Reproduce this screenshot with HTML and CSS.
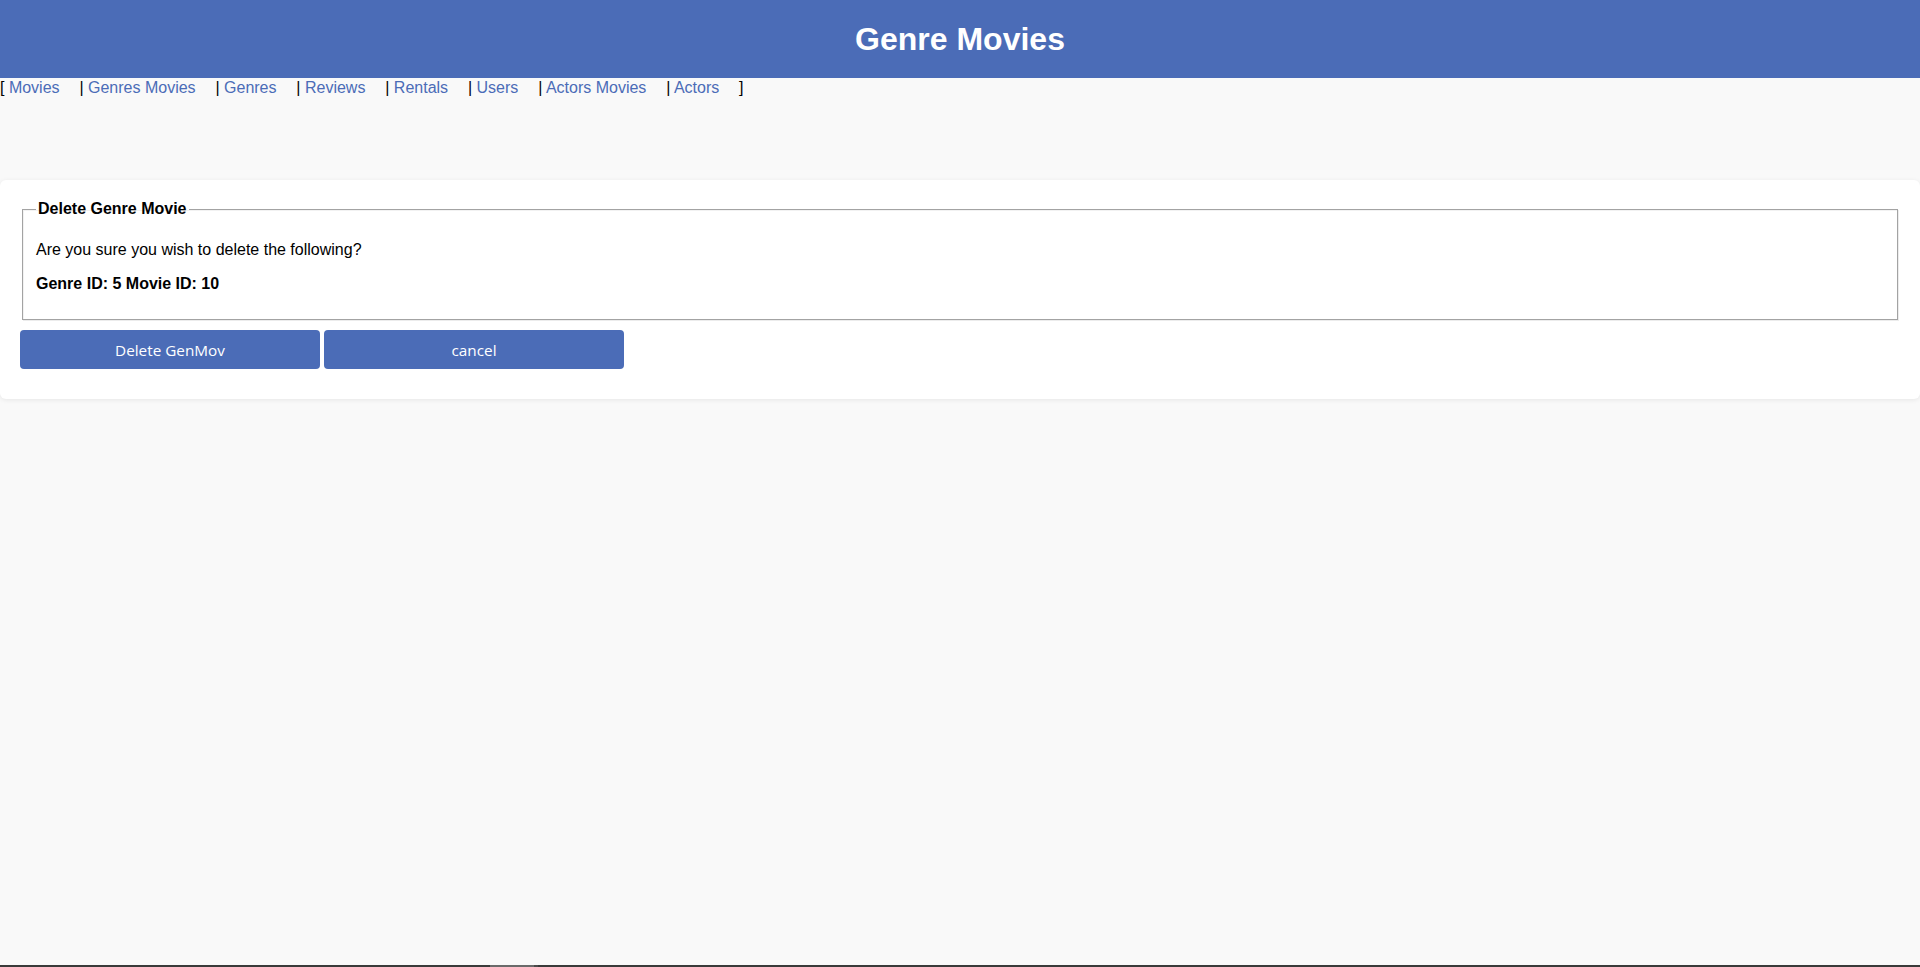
FILE: index.html
```html
<!DOCTYPE html>
<html lang="en">
<head>
<meta charset="utf-8">
<title>Genre Movies</title>
<link rel="stylesheet" href="styles.css">
</head>
<body>
<div class="page">
  <header class="topbar">
    <h1 class="title">Genre Movies</h1>
  </header>
  <nav class="nav">[ <a href="#">Movies</a> | <a href="#">Genres Movies</a> | <a href="#">Genres</a> | <a href="#">Reviews</a> | <a href="#">Rentals</a> | <a href="#">Users</a> | <a href="#">Actors Movies</a> | <a href="#">Actors</a> ]</nav>
  <main class="card">
    <form class="form">
      <fieldset class="box">
        <legend class="legend">Delete Genre Movie</legend>
        <p class="text">Are you sure you wish to delete the following?</p>
        <p class="text strong">Genre ID: 5 Movie ID: 10</p>
      </fieldset>
      <div class="actions">
        <button type="button" class="btn">Delete GenMov</button>
        <button type="button" class="btn">cancel</button>
      </div>
    </form>
  </main>
</div>
<div class="bottombar"><span class="seg-a"></span><span class="seg-b"></span><span class="seg-c"></span><span class="seg-d"></span></div>
</body>
</html>
```

FILE: styles.css
```css
html, body {
  margin: 0;
  padding: 0;
}
body {
  background: #f9f9f9;
  font-family: "Liberation Sans", Arial, sans-serif;
  font-size: 16px;
  color: #000;
  min-height: 100vh;
  display: flex;
  flex-direction: column;
}
.page {
  flex: 1;
}
.topbar {
  background: #4b6cb7;
  height: 78px;
  display: flex;
  align-items: center;
  justify-content: center;
}
.title {
  margin: 0;
  color: #fff;
  font-size: 32px;
  font-weight: bold;
  line-height: 37px;
}
.nav {
  line-height: 20px;
  color: #000;
}
.nav a {
  color: #4b6cb7;
  text-decoration: none;
  margin-right: 15.4px;
}
.card {
  display: block;
  margin-top: 82px;
  background: #fff;
  border-radius: 6px;
  box-shadow: 0 1px 5px rgba(0, 0, 0, 0.08);
  padding: 20px 20px 30px;
}
.form {
  margin: 0;
}
.box {
  margin: 0 2px;
  border: 1px solid #a3a3a3;
  box-shadow: 1px 1px 0 #ececec, inset 1px 1px 0 #f2f2f2;
  padding: 7px 12px 10px 13px;
}
.legend {
  padding: 0 2px;
  font-weight: bold;
  font-size: 16px;
}
.text {
  margin: 16px 0;
}
.strong {
  font-weight: bold;
}
.actions {
  margin-top: 10px;
  display: flex;
  gap: 4px;
}
.btn {
  width: 300px;
  height: 39px;
  background: #4b6cb7;
  color: #fff;
  border: none;
  border-radius: 4px;
  font-family: "Open Sans", "Noto Sans", sans-serif;
  font-size: 15.3px;
  padding: 0;
  cursor: pointer;
}
.bottombar {
  height: 2px;
  background: #3a3a3a;
  display: flex;
}
.seg-a {
  width: 490px;
}
.seg-b {
  width: 44px;
  background: #6a6a6a;
}
.seg-c {
  width: 4px;
  background: #4a4a4a;
}
.seg-d {
  flex: 1;
}
```
